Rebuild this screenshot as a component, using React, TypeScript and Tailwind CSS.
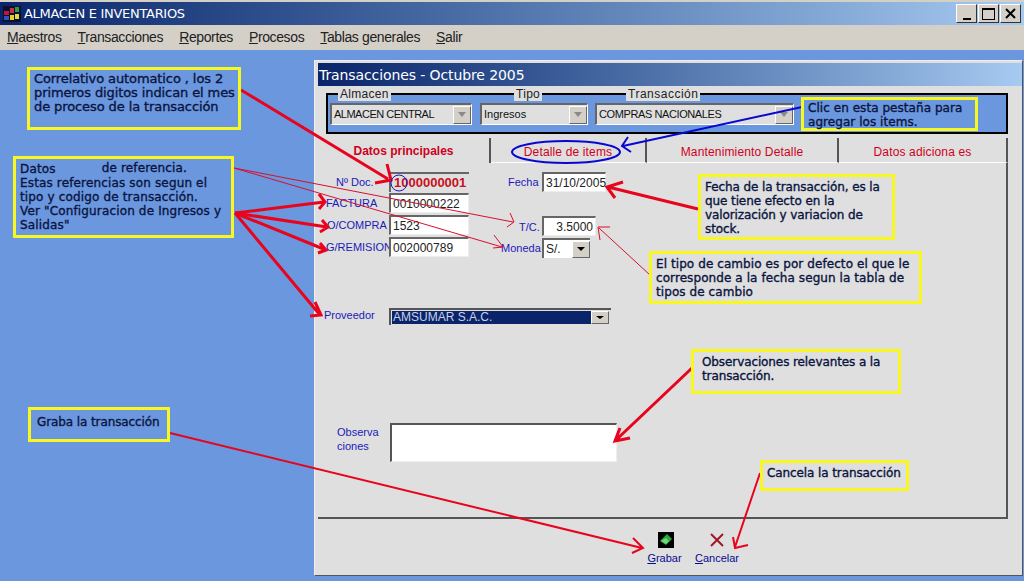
import React from 'react';

const ARIAL = 'font-["Liberation_Sans",Arial,sans-serif]';

const redThick = [
  'M241 90 L388 179 M387 164 L391 180 L375 183',
  'M235 213 L324 202 M319 194 L325 202 L319 209',
  'M235 213 L327 227 M322 220 L328 227 L320 232',
  'M235 213 L326 250 M320 243 L326 250 L318 253',
  'M235 213 L320 315 M315 302 L321 315 L310 316',
  'M698 209 L608 187 M623 182 L607 187 L615 198',
  'M692 368 L616 440 M620 428 L615 441 L630 438',
];

const redMedium = [
  'M170 433 L642 548 M633 538 L643 548 L632 553',
  'M760 473 L735 547 M733 537 L735 548 L748 545',
];

const redThin = [
  'M234 168 L513 222 M510 213 L514 222 L507 227',
  'M234 168 L502 247 M494 235 L503 247 L493 248',
  'M650 275 L599 228 M610 227 L598 227 L600 240',
];

function Overlay() {
  return (
    <svg className="absolute inset-0 pointer-events-none" width={1024} height={581} fill="none">
      {redThick.map((d) => (
        <path key={d} d={d} stroke="#e8041c" strokeWidth={3} />
      ))}
      {redMedium.map((d) => (
        <path key={d} d={d} stroke="#e8041c" strokeWidth={2} />
      ))}
      {redThin.map((d) => (
        <path key={d} d={d} stroke="#d8102c" strokeWidth={1} />
      ))}
      <path d="M802 107 L623 146 M628 137 L622 146 L631 152" stroke="#0808d0" strokeWidth={2} />
      <ellipse cx={566} cy={152} rx={54} ry={11} stroke="#0808d0" strokeWidth={2} />
      <circle cx={399} cy={183} r={8} stroke="#1818c8" strokeWidth={1} />
    </svg>
  );
}

function Callout({ className, children }: { className: string; children: React.ReactNode }) {
  return (
    <div
      className={`absolute whitespace-nowrap border-[3px] border-[#f8f820] font-["DejaVu_Sans",sans-serif] text-[12px] leading-[14px] text-[#0a1440] [-webkit-text-stroke:0.35px_#0a1440] ${className}`}
    >
      {children}
    </div>
  );
}

function Combo({ text, width, className = '' }: { text: string; width: string; className?: string }) {
  return (
    <div
      className={`flex h-[22px] items-center justify-between border-t-2 border-l-2 border-t-[#666] border-l-[#666] border-r border-b border-r-white border-b-white bg-[#dfdfdf] pl-[2px] text-[11px] text-[#111] ${ARIAL} ${width} ${className}`}
    >
      <span>{text}</span>
      <span className="flex h-[18px] w-[18px] items-center justify-center bg-[#d4d0c8] border border-t-white border-l-white border-r-[#666] border-b-[#666]">
        <span className="h-0 w-0 border-x-[4px] border-t-[5px] border-x-transparent border-t-[#8a8a8a]" />
      </span>
    </div>
  );
}

function Field({ value, width, className = '' }: { value: string; width: string; className?: string }) {
  return (
    <div
      className={`flex h-5 items-center border-t-2 border-l-2 border-t-[#666] border-l-[#666] border-r border-b border-r-[#eee] border-b-[#eee] bg-white px-[2px] text-[12px] text-[#222] ${ARIAL} ${width} ${className}`}
    >
      {value}
    </div>
  );
}

function Tab({ label, width, active }: { label: string; width: string; active?: boolean }) {
  return (
    <div
      className={`flex h-[25px] items-center justify-center border-r-2 border-r-[#555] text-[12px] text-[#d00020] ${ARIAL} ${width} ${
        active ? 'font-bold' : 'border-b border-b-white pt-[3px] tracking-[0.15px]'
      }`}
    >
      {label}
    </div>
  );
}

function Label({ children, className = '' }: { children: React.ReactNode; className?: string }) {
  return <span className={`text-[11px] leading-[14px] text-[#1a1ab8] ${ARIAL} ${className}`}>{children}</span>;
}

function WinButton({ children }: { children: React.ReactNode }) {
  return (
    <div className="flex h-[19px] w-[21px] items-center justify-center border border-t-white border-l-white border-r-[#333] border-b-[#333] bg-[#d4d0c8]">
      {children}
    </div>
  );
}

export default function App() {
  return (
    <div className="relative flex h-[581px] w-[1024px] flex-col overflow-hidden bg-[#6a97de]">
      <div className="h-[2px] bg-[#d4d0c8]" />
      <div className="flex h-[23px] items-center bg-gradient-to-r from-[#0a246a] to-[#a6caf0] pl-[3px] pr-[3px]">
        <svg width={18} height={16} viewBox="0 0 18 16" className="mr-[3px]">
          <rect width={18} height={16} fill="#0a1030" />
          <rect x={1} y={5} width={5} height={4} fill="#c01830" />
          <rect x={1} y={10} width={5} height={4} fill="#3050c0" />
          <rect x={7} y={2} width={4} height={5} fill="#c83048" />
          <rect x={7} y={9} width={4} height={5} fill="#e8d020" />
          <rect x={12} y={1} width={4} height={5} fill="#20a040" />
          <rect x={12} y={8} width={4} height={5} fill="#e8d840" />
        </svg>
        <span className='font-["DejaVu_Sans",sans-serif] text-[13px] tracking-[-0.3px] text-white'>ALMACEN E INVENTARIOS</span>
        <div className="ml-auto flex gap-[1px]">
          <WinButton>
            <span className="mt-[10px] h-[2px] w-[8px] bg-black" />
          </WinButton>
          <WinButton>
            <span className="h-[12px] w-[13px] border border-t-2 border-black" />
          </WinButton>
          <WinButton>
            <svg width={11} height={11} viewBox="0 0 11 11">
              <path d="M1 1 L10 10 M10 1 L1 10" stroke="#000" strokeWidth={2} />
            </svg>
          </WinButton>
        </div>
      </div>
      <div className={`flex h-[25px] items-center gap-4 bg-[#d4d0c8] pl-[7px] text-[14px] tracking-[-0.38px] text-[#222] ${ARIAL}`}>
        {[
          ['M', 'aestros'],
          ['T', 'ransacciones'],
          ['R', 'eportes'],
          ['P', 'rocesos'],
          ['T', 'ablas generales'],
          ['S', 'alir'],
        ].map(([first, rest]) => (
          <span key={first + rest}>
            <span className="underline">{first}</span>
            {rest}
          </span>
        ))}
      </div>

      <div className="flex-1 pl-[314px] pt-[10px]">
        <div className="flex h-[516px] w-[709px] flex-col border border-t-[#eee] border-l-[#eee] border-r-[#555] border-b-[#555] bg-[#dfdfdf] pl-[3px] pt-[2px]">
          <div className='flex h-[23px] items-center bg-gradient-to-r from-[#0a246a] to-[#a6caf0] pl-[1px] pt-[1px] font-["DejaVu_Sans",sans-serif] text-[14px] tracking-[-0.1px] text-white'>
            Transacciones - Octubre 2005
          </div>

          <div className="relative ml-[8px] mt-[7px] h-[41px] w-[682px] border-2 border-black bg-[#6a97de]">
            <span className={`absolute -top-[8px] left-[10px] bg-[#dfdfdf] px-[2px] text-[12px] leading-[14px] tracking-[0.3px] text-[#222] ${ARIAL}`}>Almacen</span>
            <span className={`absolute -top-[8px] left-[186px] bg-[#dfdfdf] px-[2px] text-[12px] leading-[14px] tracking-[0.3px] text-[#222] ${ARIAL}`}>Tipo</span>
            <span className={`absolute -top-[8px] left-[298px] bg-[#dfdfdf] px-[2px] text-[12px] leading-[14px] tracking-[0.5px] text-[#222] ${ARIAL}`}>Transacción</span>
            <div className="flex gap-[8px] pl-[2px] pt-[8px]">
              <Combo text="ALMACEN CENTRAL" width="w-[142px]" className="tracking-[-0.5px]" />
              <Combo text="Ingresos" width="w-[108px]" />
              <Combo text="COMPRAS NACIONALES" width="w-[199px]" className="-ml-px tracking-[-0.4px]" />
            </div>
          </div>

          <div className="mt-[4px] flex pl-0">
            <Tab label="Datos principales" width="w-[173px]" active />
            <Tab label="Detalle de items" width="w-[156px]" />
            <Tab label="Mantenimiento Detalle" width="w-[192px]" />
            <Tab label="Datos adiciona es" width="w-[169px]" />
          </div>

          <div className="w-[690px] h-[356px] border-r-2 border-b-2 border-r-[#555] border-b-[#555] pt-[9px]">
            <div className="flex">
              <div className="flex w-[151px] flex-col">
                <div className="flex h-5 items-center">
                  <Label className="ml-[18px] w-[53px]">Nº Doc.</Label>
                  <div className={`flex h-5 w-[80px] items-center border-t-2 border-l-2 border-t-[#666] border-l-[#666] pl-[3px] text-[13px] font-bold text-[#c81020] ${ARIAL}`}>
                    1000000001
                  </div>
                </div>
                <div className="mt-[1px] flex h-5 items-center">
                  <Label className="ml-[8px] w-[63px]">FACTURA</Label>
                  <Field value="0010000222" width="w-[80px]" />
                </div>
                <div className="mt-[2px] flex h-5 items-center">
                  <Label className="ml-[9px] w-[62px]">O/COMPRA</Label>
                  <Field value="1523" width="w-[80px]" />
                </div>
                <div className="mt-[2px] flex h-5 items-center">
                  <Label className="ml-[8px] w-[63px] whitespace-nowrap">G/REMISION</Label>
                  <Field value="002000789" width="w-[80px]" />
                </div>
              </div>
              <div className="flex w-[137px] flex-col items-start">
                <div className="flex h-5 items-center">
                  <Label className="ml-[39px] w-[34px]">Fecha</Label>
                  <Field value="31/10/2005" width="w-[64px]" />
                </div>
                <div className="mt-6 flex h-5 items-center">
                  <Label className="ml-[50px] w-[23px] pt-[2px]">T/C.</Label>
                  <Field value="3.5000" width="w-[54px]" className="justify-end" />
                </div>
                <div className="mt-[2px] flex h-5 items-center">
                  <Label className="ml-[32px] w-[41px]">Moneda</Label>
                  <div className={`flex h-5 w-[48px] items-center justify-between border-t-2 border-l-2 border-t-[#666] border-l-[#666] bg-white pl-[2px] text-[12px] text-[#222] ${ARIAL}`}>
                    S/.
                    <span className="flex h-[17px] w-[18px] items-center justify-center border border-t-white border-l-white border-r-[#666] border-b-[#666] bg-[#d4d0c8]">
                      <span className="h-0 w-0 border-x-[4px] border-t-[4px] border-x-transparent border-t-black" />
                    </span>
                  </div>
                </div>
              </div>
            </div>

            <div className="mt-[50px] flex h-[17px] items-center">
              <Label className="ml-[6px] w-[65px] pb-[3px]">Proveedor</Label>
              <div className={`flex h-[17px] w-[222px] items-center justify-between border-t-2 border-l-2 border-t-[#555] border-l-[#555] bg-[#dfdfdf] pl-[1px] text-[12px] text-[#c8d0e8] ${ARIAL}`}>
                <span className="h-[13px] w-[199px] bg-[#0a246a] pl-[1px] leading-[13px]">AMSUMAR S.A.C.</span>
                <span className="mr-[2px] flex h-[13px] w-[18px] items-center justify-center border border-t-white border-l-white border-r-[#666] border-b-[#666] bg-[#d4d0c8]">
                  <span className="h-0 w-0 border-x-[4px] border-t-[3px] border-x-transparent border-t-black" />
                </span>
              </div>
            </div>

            <div className="mt-[98px] flex">
              <div className="ml-[19px] flex w-[53px] flex-col pt-[2px]">
                <Label>Observa</Label>
                <Label>ciones</Label>
              </div>
              <div className="h-[39px] w-[227px] border-t-2 border-l-2 border-t-[#555] border-l-[#555] border-r border-b border-r-[#eee] border-b-[#eee] bg-white" />
            </div>
          </div>

          <div className="flex items-start pl-[329px] pt-[13px]">
            <div className={`flex w-[35px] flex-col items-center text-[11px] text-[#0a0a90] ${ARIAL}`}>
              <svg width={16} height={16} viewBox="0 0 16 16" className="ml-[2px]">
                <rect width={16} height={16} fill="#000" />
                <path d="M2 9 L9 2 L14 7 L8 13 Z" fill="#2aa838" />
                <path d="M3 9 L8 6 L11 9 L8 12 Z" fill="#70d878" />
              </svg>
              <span className="mt-[2px]">
                <span className="underline">G</span>rabar
              </span>
            </div>
            <div className={`ml-[13px] flex w-[44px] flex-col items-center text-[11px] text-[#0a0a90] ${ARIAL}`}>
              <svg width={16} height={16} viewBox="0 0 16 16">
                <path d="M2 2 L14 14 M14 2 L2 14" stroke="#a01828" strokeWidth={2} />
              </svg>
              <span className="mt-[2px]">
                <span className="underline">C</span>ancelar
              </span>
            </div>
          </div>
        </div>
      </div>

      <Overlay />

      <Callout className="left-[27px] top-[67px] h-[63px] w-[214px] pl-[4px] pt-[2px] text-[13px] leading-4 tracking-[-0.1px]">
        Correlativo automatico , los 2
        <br />
        primeros digitos indican el mes
        <br />
        de proceso de la transacción
      </Callout>
      <Callout className="left-[13px] top-[156px] h-[82px] w-[221px] pl-[4px] pt-[3px] tracking-[0.15px]">
        Datos<span className="relative -top-px ml-[46px]">de referencia.</span>
        <br />
        Estas referencias son segun el
        <br />
        tipo y codigo de transacción.
        <br />
        Ver "Configuracion de Ingresos y
        <br />
        Salidas"
      </Callout>
      <Callout className="left-[801px] top-[97px] h-[34px] w-[177px] pl-[4px] pt-[1px] tracking-[0.05px]">
        Clic en esta pestaña para
        <br />
        agregar los items.
      </Callout>
      <Callout className="left-[698px] top-[174px] h-[66px] w-[197px] pl-[4px] pt-[3px] tracking-[-0.1px]">
        Fecha de la transacción, es la
        <br />
        que tiene efecto en la
        <br />
        valorización y variacion de
        <br />
        stock.
      </Callout>
      <Callout className="left-[649px] top-[251px] h-[53px] w-[273px] pl-[4px] pt-[3px] tracking-[0.08px]">
        El tipo de cambio es por defecto el que le
        <br />
        corresponde a la fecha segun la tabla de
        <br />
        tipos de cambio
      </Callout>
      <Callout className="left-[691px] top-[349px] h-[45px] w-[210px] pl-[8px] pt-[3px] tracking-[-0.1px]">
        Observaciones relevantes a la
        <br />
        transacción.
      </Callout>
      <Callout className="left-[28px] top-[407px] h-[35px] w-[142px] pl-[6px] pt-[5px] tracking-[-0.1px]">Graba la transacción</Callout>
      <Callout className="left-[760px] top-[460px] h-[31px] w-[149px] pl-[4px] pt-[3px] tracking-[-0.1px]">Cancela la transacción</Callout>
    </div>
  );
}
